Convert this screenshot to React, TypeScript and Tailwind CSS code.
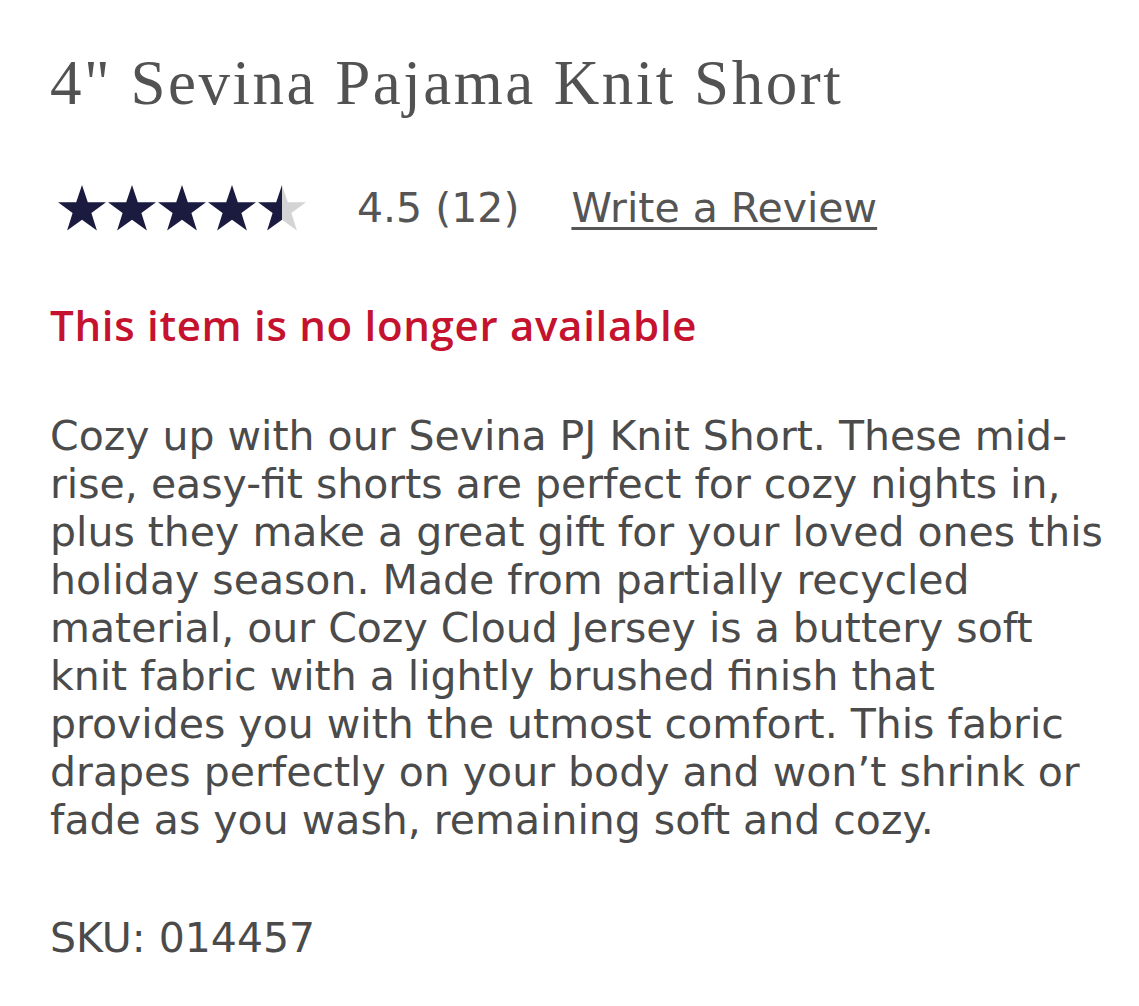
import React from "react";

const lines = [
  "Cozy up with our Sevina PJ Knit Short. These mid-",
  "rise, easy-fit shorts are perfect for cozy nights in,",
  "plus they make a great gift for your loved ones this",
  "holiday season. Made from partially recycled",
  "material, our Cozy Cloud Jersey is a buttery soft",
  "knit fabric with a lightly brushed finish that",
  "provides you with the utmost comfort. This fabric",
  "drapes perfectly on your body and won’t shrink or",
  "fade as you wash, remaining soft and cozy.",
];

function Star({ fill }: { fill: "full" | "half" }) {
  const id = "half-star";
  return (
    <svg width="50" height="48" viewBox="0 0 50 48" className="block">
      {fill === "half" && (
        <defs>
          <linearGradient id={id} x1="0" x2="1" y1="0" y2="0">
            <stop offset="50%" stopColor="#1b1a3f" />
            <stop offset="50%" stopColor="#d4d4d4" />
          </linearGradient>
        </defs>
      )}
      <polygon
        points="25,1 30.8,18.2 49,18.2 34.4,29 39.9,46.5 25,35.8 10.1,46.5 15.6,29 1,18.2 19.2,18.2"
        fill={fill === "half" ? `url(#${id})` : "#1b1a3f"}
      />
    </svg>
  );
}

export default function App() {
  return (
    <div className="min-h-screen bg-white pl-[50px] pt-[43px] text-[#4b4b4b] font-['DejaVu_Sans',sans-serif]">
      <h1 className="text-[63px] leading-[80px] tracking-[2.5px] text-[#525252] font-['Liberation_Serif',serif]">
        4" Sevina Pajama Knit Short
      </h1>

      <div className="mt-[61px] flex items-center">
        <div className="ml-[7px] flex">
          <Star fill="full" />
          <Star fill="full" />
          <Star fill="full" />
          <Star fill="full" />
          <Star fill="half" />
        </div>
        <span className="ml-[50px] text-[41px] leading-none text-[#555]">4.5 (12)</span>
        <a
          href="#"
          className="ml-[52px] text-[41px] leading-none text-[#555] underline decoration-[3px] underline-offset-[5px]"
        >
          Write a Review
        </a>
      </div>

      <p className="mt-[72px] text-[42px] font-semibold leading-none tracking-[0.7px] text-[#c4122f] font-['Open_Sans',sans-serif]">
        This item is no longer available
      </p>

      <div className="mt-[66px] text-[41px] leading-[48px]">
        {lines.map((l) => (
          <div key={l} className="whitespace-nowrap">
            {l}
          </div>
        ))}
      </div>

      <p className="mt-[74px] text-[41px] leading-none">SKU: 014457</p>
    </div>
  );
}
